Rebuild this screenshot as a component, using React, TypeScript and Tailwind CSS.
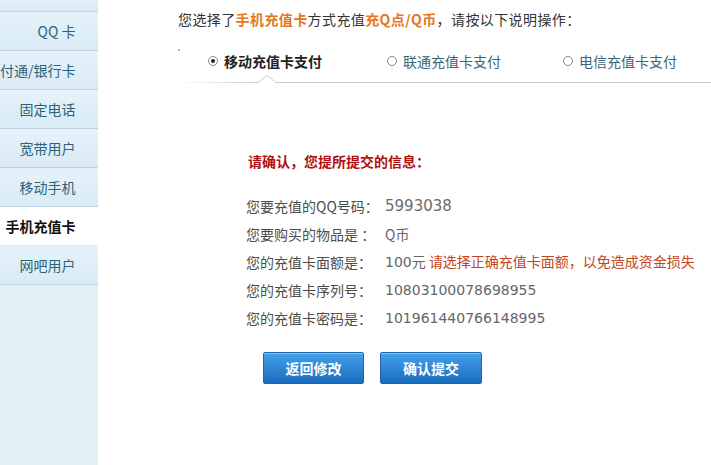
import React from "react";

const font = { fontFamily: '"Noto Sans CJK SC", "Noto Sans", sans-serif' };
const digits = { fontFamily: '"DejaVu Sans", "Noto Sans CJK SC", sans-serif' };

function SideItem({ label, active }: { label: string; active?: boolean }) {
  return (
    <div
      className={
        "h-[39px] flex items-center justify-end overflow-hidden whitespace-nowrap pr-[22px] border-b " +
        (active
          ? "bg-white border-[#d9e7ee] text-[#111] font-bold"
          : "bg-gradient-to-b from-[#e6f2f9] to-[#d9ebf5] border-[#bcd4df] text-[#2d6378]")
      }
    >
      <span className="shrink-0 text-[14px] leading-[20px]">{label}</span>
    </div>
  );
}

function Radio({ checked }: { checked?: boolean }) {
  return (
    <span className="w-[10px] h-[10px] rounded-full border border-[#8a8a8a] bg-white flex items-center justify-center shrink-0">
      {checked && <span className="w-[4px] h-[4px] rounded-full bg-[#222]" />}
    </span>
  );
}

function Row({ label, children }: { label: string; children: React.ReactNode }) {
  return (
    <div className="flex items-center h-[28px] text-[14px] whitespace-nowrap">
      <span className="w-[139px] text-[#4d4d4d]">{label}</span>
      <span className="text-[#666]">{children}</span>
    </div>
  );
}

export default function App() {
  return (
    <div className="w-[711px] h-[465px] flex overflow-hidden bg-white" style={font}>
      <div className="w-[94px] h-full flex shrink-0">
        <div className="flex-1 flex flex-col bg-[#e1eff7]">
          <div className="h-[12px] bg-gradient-to-b from-[#e3f0f8] to-[#d9ebf5] border-b border-[#bcd4df]" />
          <SideItem label="QQ 卡" />
          <SideItem label="付通/银行卡" />
          <SideItem label="固定电话" />
          <SideItem label="宽带用户" />
          <SideItem label="移动手机" />
          <SideItem label="手机充值卡" active />
          <SideItem label="网吧用户" />
          <div className="flex-1 bg-[#e1eff7]" />
        </div>
        <div className="w-[1px] bg-[#f0f0f0]" />
      </div>

      <div className="flex-1 flex flex-col">
        <div className="pl-[84px] mt-[9px] h-[20px] leading-[20px] text-[14px] text-[#333] whitespace-nowrap tracking-[0.4px]">
          您选择了<b className="text-[#e6761b]">手机充值卡</b>方式充值<b className="text-[#e6761b]">充Q点/Q币</b>，请按以下说明操作：
        </div>

        <div className="ml-[84px] mt-[12px] relative h-[44px]">
          <span className="absolute left-0 top-[8px] w-[2px] h-[2px] bg-[#bbb]" />
          <div className="flex items-center h-[40px] text-[14px] whitespace-nowrap">
            <div className="flex items-center gap-[6px] ml-[30px]">
              <Radio checked />
              <span className="font-bold text-[#222]">移动充值卡支付</span>
            </div>
            <div className="flex items-center gap-[6px] ml-[65px]">
              <Radio />
              <span className="text-[#3a6678]">联通充值卡支付</span>
            </div>
            <div className="flex items-center gap-[6px] ml-[62px]">
              <Radio />
              <span className="text-[#3a6678]">电信充值卡支付</span>
            </div>
          </div>
          <svg className="absolute left-0 top-[33px]" width="533" height="10" viewBox="0 0 533 10">
            <defs>
              <linearGradient id="ln" x1="0" x2="533" y1="0" y2="0" gradientUnits="userSpaceOnUse">
                <stop offset="0" stopColor="#ffffff" />
                <stop offset="0.16" stopColor="#c9c9c9" />
                <stop offset="1" stopColor="#c9c9c9" />
              </linearGradient>
            </defs>
            <polyline
              points="0,8.5 80,8.5 89,1.5 98,8.5 533,8.5"
              fill="none"
              stroke="url(#ln)"
              strokeWidth="1"
            />
          </svg>
        </div>

        <div className="ml-[154px] mt-[66px] h-[20px] leading-[20px] text-[14px] font-bold text-[#b0100f] whitespace-nowrap">
          请确认，您提所提交的信息：
        </div>

        <div className="ml-[152px] mt-[21px] flex flex-col">
          <Row label="您要充值的QQ号码：">
            <span className="text-[15px] text-[#6b6b6b]" style={digits}>5993038</span>
          </Row>
          <Row label="您要购买的物品是 ：">Q币</Row>
          <Row label="您的充值卡面额是：">
            <span style={digits}>100</span>元 <span className="text-[#c4451d]">请选择正确充值卡面额，以免造成资金损失</span>
          </Row>
          <Row label="您的充值卡序列号：">
            <span style={digits}>10803100078698955</span>
          </Row>
          <Row label="您的充值卡密码是：">
            <span style={digits}>101961440766148995</span>
          </Row>
        </div>

        <div className="ml-[169px] mt-[20px] flex gap-[16px]">
          <button className="w-[101px] h-[32px] rounded-[2px] border border-[#1d64a8] bg-gradient-to-b from-[#44a2ea] to-[#1a6cc0] text-white font-bold text-[14px] shadow-[inset_0_1px_0_rgba(255,255,255,0.35)]">
            返回修改
          </button>
          <button className="w-[102px] h-[32px] rounded-[2px] border border-[#1d64a8] bg-gradient-to-b from-[#44a2ea] to-[#1a6cc0] text-white font-bold text-[14px] shadow-[inset_0_1px_0_rgba(255,255,255,0.35)]">
            确认提交
          </button>
        </div>
      </div>
    </div>
  );
}
